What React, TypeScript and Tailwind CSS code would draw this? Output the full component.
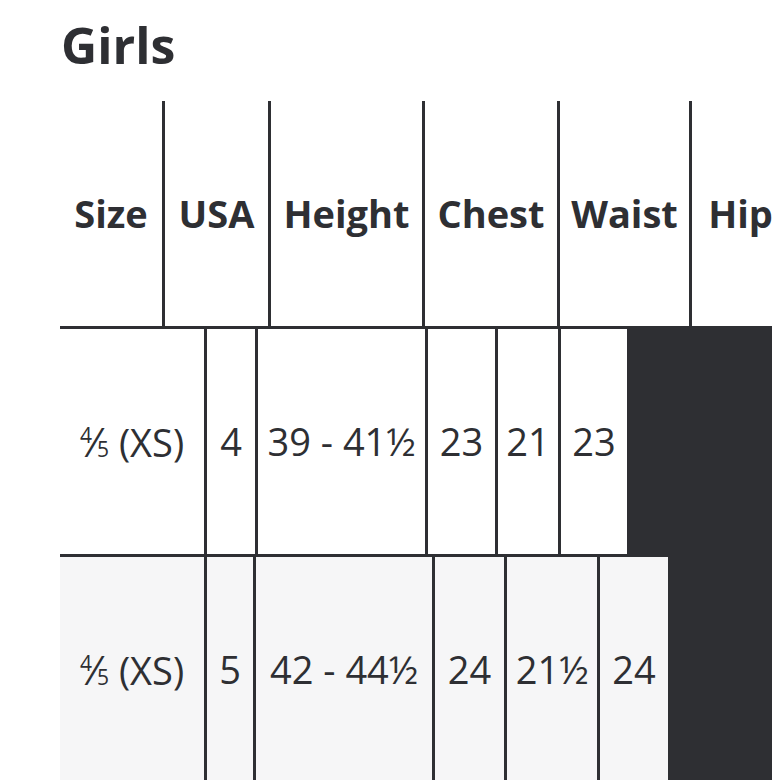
const header = [
  { label: "Size", w: "w-[102px]" },
  { label: "USA", w: "w-[106px]" },
  { label: "Height", w: "w-[154px]" },
  { label: "Chest", w: "w-[135px]" },
  { label: "Waist", w: "w-[132px]" },
  { label: "Hip", w: "w-[100px]" },
];

type Cell = { text: React.ReactNode; w: string };

function Fraction() {
  return (
    <span className="inline-flex items-baseline">
      <span className="relative top-[-14px] text-[21px]">4</span>
      <span className="text-[40px]">⁄</span>
      <span className="text-[21px]">5</span>
    </span>
  );
}

const size = (
  <span>
    <Fraction /> (XS)
  </span>
);

const rows: { bg: string; cells: Cell[] }[] = [
  {
    bg: "bg-white",
    cells: [
      { text: size, w: "w-[144px]" },
      { text: "4", w: "w-[51px]" },
      { text: "39 - 41½", w: "w-[170px]" },
      { text: "23", w: "w-[70px]" },
      { text: "21", w: "w-[63px]" },
      { text: "23", w: "w-[69px]" },
    ],
  },
  {
    bg: "bg-[#f6f6f7]",
    cells: [
      { text: size, w: "w-[144px]" },
      { text: "5", w: "w-[49px]" },
      { text: "42 - 44½", w: "w-[179px]" },
      { text: "24", w: "w-[72px]" },
      { text: "21½", w: "w-[93px]" },
      { text: "24", w: "w-[71px]" },
    ],
  },
];

export default function App() {
  return (
    <div className="h-screen w-screen overflow-hidden bg-white font-['Open_Sans',sans-serif] text-[#2e2f33]">
      <h1 className="ml-[61px] pt-[20px] text-[50px] font-bold leading-[50px]">Girls</h1>
      <div className="ml-[60px] mt-[31px] w-max">
        <div className="flex h-[225px] bg-white">
          {header.map((h, i) => (
            <div
              key={h.label}
              className={`flex shrink-0 items-center justify-center text-[38px] font-bold ${h.w} ${
                i > 0 ? "border-l-[3px] border-[#2e2f33]" : ""
              }`}
            >
              {h.label}
            </div>
          ))}
        </div>
        <div className="bg-[#2e2f33]">
          {rows.map((r, ri) => (
            <div key={ri} className={`flex h-[228px] w-max border-t-[3px] border-[#2e2f33] ${r.bg}`}>
              {r.cells.map((c, i) => (
                <div
                  key={i}
                  className={`flex shrink-0 items-center justify-center text-[38px] ${c.w} ${
                    i > 0 ? "border-l-[3px] border-[#2e2f33]" : ""
                  }`}
                >
                  {c.text}
                </div>
              ))}
            </div>
          ))}
        </div>
      </div>
    </div>
  );
}
